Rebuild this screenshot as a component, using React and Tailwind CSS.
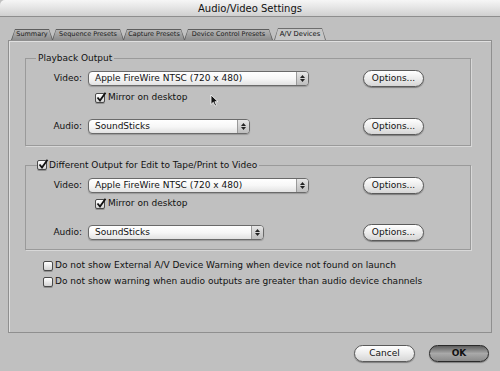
import React from 'react';

const font = { fontFamily: '"DejaVu Sans", "Liberation Sans", sans-serif' };

function Check({ checked }) {
  return (
    <span className="relative inline-flex h-[10px] w-[10px] shrink-0 rounded-[2px] border border-[#4a4a4a] bg-gradient-to-b from-[#ffffff] to-[#d4d4d4] shadow-[0_1px_0_rgba(0,0,0,0.25)]">
      {checked && (
        <svg className="absolute -top-[2px] left-0" width="11" height="11" viewBox="0 0 11 11">
          <path d="M1.5 5.5 L4 8.5 L9.5 0.8" fill="none" stroke="#111" strokeWidth="1.8" />
        </svg>
      )}
    </span>
  );
}

function Popup({ value, width }) {
  return (
    <div
      className="flex h-[15px] items-stretch rounded-[4px] border border-[#6a6a6a] bg-gradient-to-b from-[#ffffff] via-[#f7f7f7] to-[#e2e2e2] shadow-[0_1px_1px_rgba(0,0,0,0.2)]"
      style={{ width }}
    >
      <span className="flex-1 truncate pl-[6px] text-[9px] leading-[13px] text-[#111]">{value}</span>
      <span className="flex w-[12px] flex-col items-center justify-center gap-[1px] rounded-r-[3px] border-l border-[#9a9a9a] bg-gradient-to-b from-[#e6e6e6] to-[#bdbdbd]">
        <svg width="5" height="3" viewBox="0 0 5 3"><path d="M0 3 L2.5 0 L5 3Z" fill="#222" /></svg>
        <svg width="5" height="3" viewBox="0 0 5 3"><path d="M0 0 L2.5 3 L5 0Z" fill="#222" /></svg>
      </span>
    </div>
  );
}

function Pill({ children, dark, width = 61 }) {
  return (
    <button
      type="button"
      className={
        'flex h-[17px] items-center justify-center rounded-full border text-[9px] leading-none shadow-[0_1px_1px_rgba(0,0,0,0.35)] ' +
        (dark
          ? 'border-[#2a2a2a] bg-gradient-to-b from-[#5e5e5e] via-[#a9a9a9] to-[#8a8a8a] font-bold text-[#111]'
          : 'border-[#5a5a5a] bg-gradient-to-b from-[#ffffff] via-[#ececec] to-[#d6d6d6] text-[#111]')
      }
      style={{ width }}
    >
      {children}
    </button>
  );
}

function Row({ label, children, button }) {
  return (
    <div className="flex h-[17px] items-center">
      <span className="w-[57px] pr-[1px] text-right text-[9px] text-[#111]">{label}</span>
      <div className="ml-[5px] flex-1">{children}</div>
      <div className="mr-[46px]">{button}</div>
    </div>
  );
}

function Mirror({ mt }) {
  return (
    <div className={'flex h-[12px] items-center gap-[3px] pl-[69px] ' + mt}>
      <Check checked />
      <span className="text-[9px] text-[#111]">Mirror on desktop</span>
    </div>
  );
}

const tabs = [
  ['Summary', 42],
  ['Sequence Presets', 72],
  ['Capture Presets', 62],
  ['Device Control Presets', 89],
];

export default function App() {
  return (
    <div className="relative h-[371px] w-[500px] overflow-hidden bg-[#c0c0c0]" style={font}>
      {/* title bar */}
      <div className="flex h-[17px] items-center justify-center rounded-tl-[5px] border-b border-[#8e8e8e] bg-gradient-to-b from-[#f6f6f6] via-[#e4e4e4] to-[#d0d0d0] text-[10px] text-[#111]">
        Audio/Video Settings
      </div>

      {/* tabs */}
      <div className="mt-[11px] flex h-[12px] items-end pl-[11px]">
        {tabs.map(([t, w]) => (
          <div
            key={t}
            className="-mr-[1px] flex h-[11px] items-center bg-[#5e5e5e] px-[1px] pt-[1px] [clip-path:polygon(4px_0,calc(100%-4px)_0,100%_100%,0_100%)]"
            style={{ width: w }}
          >
            <div className="flex h-full w-full items-center justify-center bg-gradient-to-b from-[#b4b4b4] to-[#8e8e8e] text-[6.5px] text-[#1a1a1a] [clip-path:polygon(3px_0,calc(100%-3px)_0,100%_100%,0_100%)]">
              {t}
            </div>
          </div>
        ))}
        <div className="ml-[2px] flex h-[12px] w-[52px] items-center bg-[#6e6e6e] px-[1px] pt-[1px] [clip-path:polygon(4px_0,calc(100%-4px)_0,100%_100%,0_100%)]">
          <div className="flex h-full w-full items-center justify-center bg-[#c6c6c6] text-[6.8px] text-[#111] [clip-path:polygon(3px_0,calc(100%-3px)_0,100%_100%,0_100%)]">
            A/V Devices
          </div>
        </div>
      </div>

      {/* panel */}
      <div className="ml-[8px] h-[293px] w-[484px] border border-[#8f8f8f] shadow-[inset_1px_1px_0_#e0e0e0] pl-[16px] pt-[17px]">
        {/* group 1 */}
        <div className="relative h-[88px] w-[446px] border border-[#9a9a9a] shadow-[1px_1px_0_#d8d8d8] pt-[11px]">
          <span className="absolute -top-[7px] left-[10px] bg-[#c0c0c0] px-[2px] text-[9px] leading-[12px] text-[#111]">
            Playback Output
          </span>
          <Row label="Video:" button={<Pill>Options...</Pill>}>
            <Popup value="Apple FireWire NTSC (720 x 480)" width={221} />
          </Row>
          <Mirror mt="mt-[5px]" />
          <div className="mt-[14px]">
            <Row label="Audio:" button={<Pill>Options...</Pill>}>
              <Popup value="SoundSticks" width={162} />
            </Row>
          </div>
        </div>

        {/* group 2 */}
        <div className="relative mt-[19px] h-[85px] w-[446px] border border-[#9a9a9a] shadow-[1px_1px_0_#d8d8d8] pt-[11px]">
          <span className="absolute -top-[7px] left-[11px] flex items-center gap-[2px] bg-[#c0c0c0] pr-[2px] text-[9px] leading-[12px] text-[#111]">
            <Check checked />
            Different Output for Edit to Tape/Print to Video
          </span>
          <Row label="Video:" button={<Pill>Options...</Pill>}>
            <Popup value="Apple FireWire NTSC (720 x 480)" width={221} />
          </Row>
          <Mirror mt="mt-[4px]" />
          <div className="mt-[14px]">
            <Row label="Audio:" button={<Pill>Options...</Pill>}>
              <Popup value="SoundSticks" width={176} />
            </Row>
          </div>
        </div>

        {/* warnings */}
        <div className="mt-[8px] flex flex-col pl-[18px]">
          <label className="flex h-[16px] items-center gap-[2px] text-[9px] text-[#111]">
            <Check />
            Do not show External A/V Device Warning when device not found on launch
          </label>
          <label className="flex h-[16px] items-center gap-[2px] text-[9px] text-[#111]">
            <Check />
            Do not show warning when audio outputs are greater than audio device channels
          </label>
        </div>
      </div>

      {/* buttons */}
      <div className="mt-[12px] flex justify-end gap-[14px] pr-[11px]">
        <Pill>Cancel</Pill>
        <Pill dark width={60}>OK</Pill>
      </div>

      {/* cursor */}
      <svg className="absolute left-[210px] top-[94px]" width="9" height="13" viewBox="0 0 9 13">
        <path d="M1 1 L1 10.5 L3.3 8.3 L5 12 L6.5 11.3 L4.9 7.7 L8 7.7 Z" fill="#111" stroke="#fff" strokeWidth="0.8" />
      </svg>
    </div>
  );
}
